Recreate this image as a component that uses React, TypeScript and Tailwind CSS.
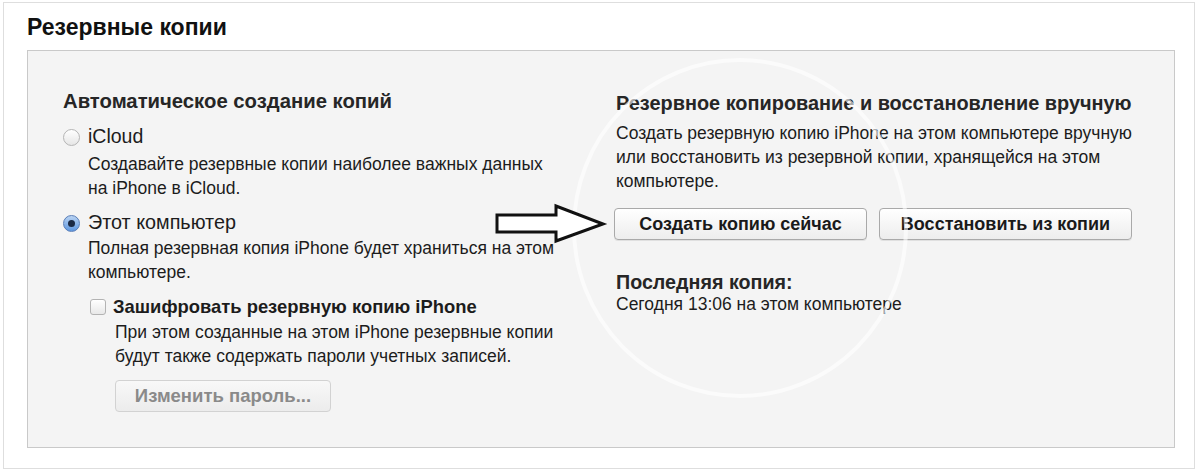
import React from 'react';

const font = { fontFamily: '"Liberation Sans", Arial, sans-serif' };

const Radio: React.FC<{ checked?: boolean }> = ({ checked }) =>
  checked ? (
    <span className="w-[17px] h-[17px] rounded-full border border-[#5b7fb8] bg-gradient-to-b from-[#b9d3f2] to-[#5e97df] flex items-center justify-center shrink-0">
      <span className="w-[7px] h-[7px] rounded-full bg-[#1b2a44]" />
    </span>
  ) : (
    <span className="w-[17px] h-[17px] rounded-full border border-[#b5b5b5] bg-gradient-to-b from-white to-[#e6e6e6] shrink-0" />
  );

const MacButton: React.FC<{ children: React.ReactNode; disabled?: boolean; className?: string }> = ({ children, disabled, className }) => (
  <button
    className={
      'h-[32px] rounded-[4px] border flex items-center justify-center bg-gradient-to-b ' +
      (disabled
        ? 'border-[#d2d2d2] from-[#f8f8f8] to-[#ececec] text-[#8a8a8a]'
        : 'border-[#a9a9a9] from-white to-[#ededed] text-[#1a1a1a] shadow-[0_1px_0_rgba(0,0,0,0.08)]') +
      ' ' + (className ?? '')
    }
  >
    {children}
  </button>
);

export default function App() {
  return (
    <div className="w-[1200px] h-[474px] bg-white relative overflow-hidden" style={font}>
      <div className="absolute left-[3px] top-[2px] w-[1192px] h-[467px] border border-[#dedede]" />
      <div className="relative pt-[13px] pl-[27px]">
        <h1 className="text-[23px] leading-[28px] font-bold text-[#111]">Резервные копии</h1>

        <div className="mt-[9px] w-[1148px] h-[398px] bg-[#f4f4f4] border border-[#c9c9c9] flex pt-[38px]">
          {/* left column */}
          <div className="pl-[35px] w-[552px] text-[#1c1c1c]">
            <h2 className="text-[20.3px] leading-[24px] font-bold text-[#262626]">Автоматическое создание копий</h2>

            <div className="mt-[12px] flex items-center gap-[8px] h-[24px]">
              <Radio />
              <span className="text-[19.5px]">iCloud</span>
            </div>
            <p className="pl-[25px] mt-[4px] text-[17.5px] leading-[23.5px]">
              Создавайте резервные копии наиболее важных данных<br />на iPhone в iCloud.
            </p>

            <div className="mt-[11px] flex items-center gap-[8px] h-[24px]">
              <Radio checked />
              <span className="text-[19.8px]">Этот компьютер</span>
            </div>
            <p className="pl-[25px] mt-[1px] text-[17.5px] leading-[24px]">
              Полная резервная копия iPhone будет храниться на этом<br />компьютере.
            </p>

            <div className="pl-[27px] mt-[11px] flex items-center gap-[7px] h-[24px]">
              <span className="w-[16px] h-[16px] rounded-[3px] border border-[#b3b3b3] bg-gradient-to-b from-white to-[#e8e8e8] shrink-0" />
              <span className="text-[18.4px] font-bold">Зашифровать резервную копию iPhone</span>
            </div>
            <p className="pl-[52px] mt-[2px] text-[17.5px] leading-[23.5px]">
              При этом созданные на этом iPhone резервные копии<br />будут также содержать пароли учетных записей.
            </p>
            <div className="pl-[52px] mt-[12px]">
              <MacButton disabled className="w-[216px] font-bold text-[18.5px]">Изменить пароль...</MacButton>
            </div>
          </div>

          <div className="w-[36px]" />

          {/* right column */}
          <div className="text-[#1c1c1c]">
            <h2 className="text-[19.9px] leading-[24px] font-bold text-[#262626] pt-[2px]">Резервное копирование и восстановление вручную</h2>
            <p className="mt-[6px] text-[17.5px] leading-[24px]">
              Создать резервную копию iPhone на этом компьютере вручную<br />
              или восстановить из резервной копии, хранящейся на этом<br />
              компьютере.
            </p>
            <div className="mt-[15px] flex gap-[12px] -ml-[2px]">
              <MacButton className="w-[253px] font-bold text-[18px]">Создать копию сейчас</MacButton>
              <MacButton className="w-[253px] font-bold text-[18px]">Восстановить из копии</MacButton>
            </div>
            <h3 className="mt-[31px] text-[19.7px] leading-[22px] font-bold text-[#262626]">Последняя копия:</h3>
            <p className="text-[17.5px] leading-[22px]">Сегодня 13:06 на этом компьютере</p>
          </div>
        </div>
      </div>

      {/* annotation: hand-drawn circle and arrow */}
      <svg className="absolute left-0 top-0 pointer-events-none" width="1200" height="474">
        <ellipse cx="740" cy="228" rx="166" ry="168" fill="none" stroke="white" strokeWidth="4" opacity="0.6" />
        <polygon
          points="497,215 556,215 556,206 603,224 556,241 556,232 497,232"
          fill="white"
          stroke="#111"
          strokeWidth="3"
          strokeLinejoin="miter"
        />
      </svg>
    </div>
  );
}
